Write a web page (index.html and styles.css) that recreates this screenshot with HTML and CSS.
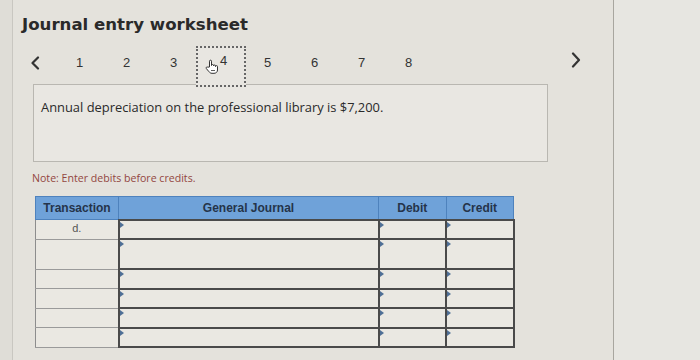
FILE: index.html
```html
<!DOCTYPE html>
<html>
<head>
<meta charset="utf-8">
<link rel="stylesheet" href="styles.css">
</head>
<body>
<div class="page">
  <div class="panel">
    <h1 class="title">Journal entry worksheet</h1>
    <div class="nav">
      <div class="arrow prev">
        <svg width="10" height="14" viewBox="0 0 10 14"><path d="M8 1.5 L2.5 7 L8 12.5" fill="none" stroke="#333" stroke-width="2.2" stroke-linecap="round" stroke-linejoin="round"/></svg>
      </div>
      <div class="steps">
        <span class="step">1</span>
        <span class="step">2</span>
        <span class="step">3</span>
        <span class="step active">
          <svg class="hand" width="14" height="15" viewBox="0 0 14 15"><path d="M4.5 8 V2.2 a1 1 0 0 1 2 0 V6.5 a1 1 0 0 1 2 0 V7 a1 1 0 0 1 2 0 V7.6 a1 1 0 0 1 2 0 V11 c0 2 -1.5 3.3 -3.5 3.3 H7 c-1.5 0 -2.3 -0.7 -3.2 -1.8 L1.3 9.5 a1 1 0 0 1 1.5 -1.3 Z" fill="#fff" stroke="#333" stroke-width="1"/><path d="M6 11.5 h4" stroke="#333" stroke-width="0.8"/></svg>
          <span class="num">4</span>
        </span>
        <span class="step">5</span>
        <span class="step">6</span>
        <span class="step">7</span>
        <span class="step">8</span>
      </div>
      <div class="arrow next">
        <svg width="10" height="16" viewBox="0 0 10 16"><path d="M2 1.5 L8 8 L2 14.5" fill="none" stroke="#333" stroke-width="2.2" stroke-linecap="round" stroke-linejoin="round"/></svg>
      </div>
    </div>
    <div class="desc">Annual depreciation on the professional library is $7,200.</div>
    <p class="note">Note: Enter debits before credits.</p>
    <table class="journal">
      <colgroup>
        <col class="c-trans"><col class="c-gj"><col class="c-amt"><col class="c-amt">
      </colgroup>
      <thead>
        <tr><th>Transaction</th><th>General Journal</th><th>Debit</th><th>Credit</th></tr>
      </thead>
      <tbody>
        <tr class="r-short"><td class="trans">d.</td><td class="inp"></td><td class="inp"></td><td class="inp"></td></tr>
        <tr class="r-tall"><td class="trans"></td><td class="inp"></td><td class="inp"></td><td class="inp"></td></tr>
        <tr class="r-short"><td class="trans"></td><td class="inp"></td><td class="inp"></td><td class="inp"></td></tr>
        <tr class="r-short"><td class="trans"></td><td class="inp"></td><td class="inp"></td><td class="inp"></td></tr>
        <tr class="r-short"><td class="trans"></td><td class="inp"></td><td class="inp"></td><td class="inp"></td></tr>
        <tr class="r-short"><td class="trans"></td><td class="inp"></td><td class="inp"></td><td class="inp"></td></tr>
      </tbody>
    </table>
  </div>
  <div class="side"></div>
</div>
</body>
</html>
```

FILE: styles.css
```css
* { box-sizing: border-box; }
html, body { margin: 0; padding: 0; }
body {
  width: 700px;
  height: 360px;
  overflow: hidden;
  background: #dfddd7;
  font-family: "Liberation Sans", Arial, sans-serif;
  color: #333;
}
.page {
  display: flex;
  height: 360px;
}
.panel {
  margin-left: 12px;
  width: 602px;
  height: 360px;
  border-left: 1px solid #c9c7c1;
  border-right: 1px solid #a8a69f;
  background: #e4e2dc;
  padding: 14px 0 0 9px;
}
.side {
  flex: 1;
  background: #e7e6e1;
}
.title {
  margin: 0;
  font-family: "DejaVu Sans", Verdana, sans-serif;
  font-weight: bold;
  font-size: 16.6px;
  line-height: 22px;
  color: #2a2a2a;
}
.nav {
  display: flex;
  align-items: center;
  height: 41px;
  margin-top: 10px;
}
.arrow {
  display: flex;
  align-items: center;
}
.prev {
  width: 34px;
  padding-left: 8px;
  margin-bottom: 8px;
}
.steps {
  display: flex;
  align-items: center;
  height: 41px;
}
.step {
  width: 47px;
  height: 41px;
  display: flex;
  align-items: center;
  justify-content: center;
  font-size: 13px;
  color: #333;
  padding-bottom: 8px;
}
.step.active {
  width: 50px;
  margin: 0 -1.5px;
  border: 2px dotted #666;
  background: #e8e6e1;
  position: relative;
  padding-bottom: 8px;
}
.step.active .num {
  position: relative;
  left: 3px;
  top: -2px;
}
.hand {
  position: absolute;
  left: 7px;
  top: 11px;
}
.next {
  margin-left: 139px;
  margin-bottom: 14px;
}
.desc {
  margin: -3px 0 0 11px;
  width: 515px;
  height: 78px;
  border: 1px solid #b9b7b1;
  background: #e9e7e2;
  padding: 13px 0 0 7px;
  font-family: "Open Sans", Verdana, sans-serif;
  font-size: 12.9px;
  color: #2a2a2a;
}
.note {
  margin: 9px 0 0 10px;
  font-family: "Open Sans", Verdana, sans-serif;
  font-size: 10.6px;
  line-height: 14px;
  color: #93463f;
}
.journal {
  margin: 11px 0 0 13px;
  border-collapse: collapse;
  table-layout: fixed;
  width: 478px;
}
.c-trans { width: 83px; }
.c-gj { width: 260px; }
.c-amt { width: 67.5px; }
.journal th {
  height: 23px;
  padding: 0;
  background: #6fa2d9;
  border: 1px solid #4e82bd;
  color: #25344a;
  font-size: 12px;
  font-weight: bold;
  text-align: center;
}
.journal td {
  padding: 0;
  background: #eae8e2;
}
.r-short td { height: 19.5px; }
.r-tall td { height: 30px; }
.journal td.trans {
  border-left: 1px solid #8d8d8d;
  border-bottom: 1px solid #9a9a9a;
  border-right: 2px solid #4a4a4a;
  text-align: center;
  vertical-align: top;
  font-size: 11px;
  line-height: 17px;
  color: #555;
}
.journal td.inp {
  border: 2px solid #4a4a4a;
  position: relative;
}
.journal td.inp::before {
  content: "";
  position: absolute;
  left: 0;
  top: 1px;
  border-top: 3px solid transparent;
  border-bottom: 3px solid transparent;
  border-left: 4px solid #4f6f96;
}
```
